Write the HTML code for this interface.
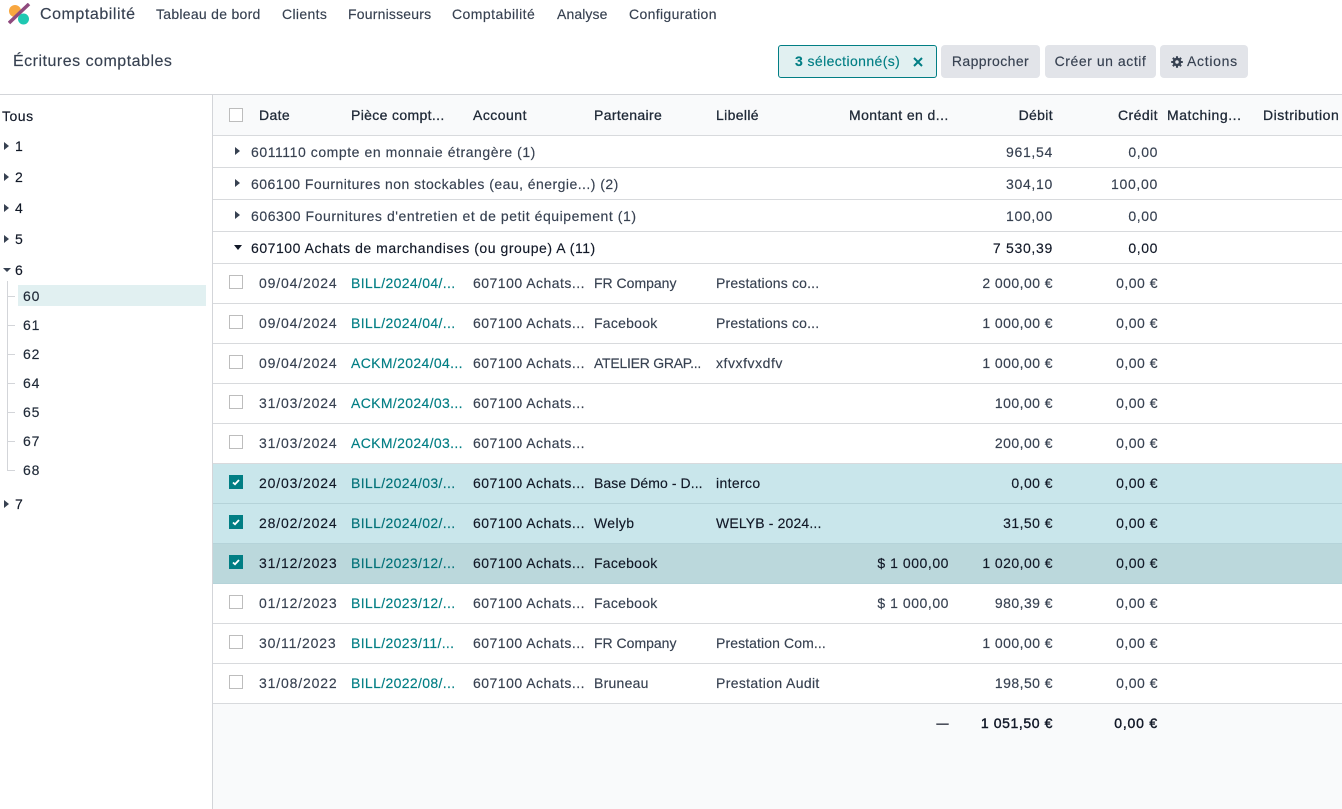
<!DOCTYPE html>
<html lang="fr"><head><meta charset="utf-8"><title>Écritures comptables</title>
<style>
html,body{margin:0;padding:0;background:#fff}
body{width:1342px;height:809px;position:relative;overflow:hidden;font-family:"Liberation Sans",sans-serif;font-size:14px;color:#374151;letter-spacing:.35px;-webkit-text-stroke:.15px}
.a,.r>span,.l{position:absolute;white-space:nowrap}
.a{line-height:20px}
.n{color:#111827}
.r{position:absolute;left:213px;width:1129px;height:39px;border-bottom:1px solid #d8dadd;line-height:39px}
.r>span{top:0}
.g{height:31px;line-height:33px;color:#374151;letter-spacing:.56px}
.g.o{color:#111827;letter-spacing:.54px}
.r .t{left:22px;top:11px;width:0;height:0;border-left:5px solid #374151;border-top:4px solid transparent;border-bottom:4px solid transparent}
.r .d{left:21px;top:13px;width:0;height:0;border-top:5px solid #111827;border-left:4.500px solid transparent;border-right:4.500px solid transparent}
.r .c{left:16px;top:11px;width:12px;height:12px;border:1px solid #bdbdbd;background:#fff}
.s{background:#c9e6eb;color:#111827;border-bottom-color:#b5d3d9}
.h{background:#bbd8dc;color:#111827}
.s .c{background:#017e84;border-color:#017e84}
.s .c svg{position:absolute;left:0;top:0}
.u{color:#017e84}
.s .u{color:#017178}
.c1{left:46px;letter-spacing:.85px}.c2{left:138px}.c3{left:260px;letter-spacing:.48px}.c4{left:381px}.c5{left:503px}
.m{right:393px;letter-spacing:.55px}.de{right:289px;letter-spacing:.45px}.cr{right:184px;letter-spacing:.5px}
.st{left:4px;width:0;height:0;border-left:5px solid #374151;border-top:4px solid transparent;border-bottom:4px solid transparent;position:absolute}
.btn{position:absolute;top:45px;height:33px;line-height:33px;background:#e2e4e9;border-radius:4px;text-align:center;color:#374151}
.l{background:#d3d5d9}
.sub{left:23px;color:#1f2937;letter-spacing:.9px}
.dg{letter-spacing:.9px}
</style></head><body>
<svg class="l" style="left:8px;top:3px;background:none" width="24" height="22" viewBox="0 0 24 22"><circle cx="7" cy="8" r="6" fill="#f8a740"/><circle cx="15.500" cy="16" r="5.500" fill="#1fc8b2"/><path d="M1 20L21 1" stroke="#8f4a7e" stroke-width="3.500"/></svg>
<div class="a" style="left:40px;top:4px;font-size:16px;line-height:21px;letter-spacing:.55px">Comptabilité</div>
<div class="a" style="left:156px;top:4px;letter-spacing:.28px">Tableau de bord</div>
<div class="a" style="left:282px;top:4px">Clients</div>
<div class="a" style="left:348px;top:4px;letter-spacing:.2px">Fournisseurs</div>
<div class="a" style="left:452px;top:4px;letter-spacing:.45px">Comptabilité</div>
<div class="a" style="left:557px;top:4px;letter-spacing:.1px">Analyse</div>
<div class="a" style="left:629px;top:4px">Configuration</div>
<div class="a" style="left:13px;top:51px;font-size:16px;line-height:21px;letter-spacing:.5px">Écritures comptables</div>

<div style="position:absolute;left:778px;top:45px;width:157px;height:31px;border:1px solid #017e84;border-radius:3px;background:#e1f0f1;line-height:31px;color:#017e84;letter-spacing:.4px"><span style="position:absolute;left:16px;white-space:nowrap"><b>3</b> sélectionné(s)</span><svg style="position:absolute;left:134px;top:11px" width="10" height="10" viewBox="0 0 10 10"><path d="M1 1L9 9M9 1L1 9" stroke="#017e84" stroke-width="2"/></svg></div>
<div class="btn" style="left:941px;width:99px;letter-spacing:.4px">Rapprocher</div>
<div class="btn" style="left:1045px;width:111px;letter-spacing:.55px">Créer un actif</div>
<div class="btn" style="left:1160px;width:88px;letter-spacing:.7px"><svg style="position:absolute;left:11px;top:11px" width="12" height="12" viewBox="0 0 12 12"><circle cx="6" cy="6" r="3" fill="none" stroke="#374151" stroke-width="2.500"/><path d="M6 .2v2.500M6 9.300v2.500M.2 6h2.500M9.300 6h2.500M1.900 1.900l1.800 1.800M8.300 8.300l1.800 1.800M10.100 1.900L8.300 3.700M3.700 8.300l-1.800 1.800" stroke="#374151" stroke-width="2.100"/></svg><span style="position:absolute;left:27px">Actions</span></div>

<div class="l" style="left:0;top:94px;width:1342px;height:1px"></div>
<div class="l" style="left:212px;top:95px;width:1px;height:714px"></div>

<!-- Sidebar -->
<div class="a n" style="left:2px;top:106px;letter-spacing:.5px">Tous</div>
<div class="st" style="top:142px"></div><div class="a n" style="left:15px;top:136px">1</div>
<div class="st" style="top:173px"></div><div class="a n" style="left:15px;top:167px">2</div>
<div class="st" style="top:204px"></div><div class="a n" style="left:15px;top:198px">4</div>
<div class="st" style="top:235px"></div><div class="a n" style="left:15px;top:229px">5</div>
<div class="a" style="left:3px;top:268px;width:0;height:0;border-top:4px solid #374151;border-left:4px solid transparent;border-right:4px solid transparent"></div><div class="a n" style="left:15px;top:260px">6</div>
<div class="st" style="top:500px"></div><div class="a n" style="left:15px;top:494px">7</div>
<div class="l" style="left:7px;top:281px;width:1px;height:190px"></div>
<div class="l" style="left:7px;top:296px;width:8px;height:1px"></div>
<div class="l" style="left:7px;top:325px;width:8px;height:1px"></div>
<div class="l" style="left:7px;top:354px;width:8px;height:1px"></div>
<div class="l" style="left:7px;top:383px;width:8px;height:1px"></div>
<div class="l" style="left:7px;top:412px;width:8px;height:1px"></div>
<div class="l" style="left:7px;top:441px;width:8px;height:1px"></div>
<div class="l" style="left:7px;top:470px;width:8px;height:1px"></div>
<div class="l" style="left:18px;top:285px;width:188px;height:21px;background:#e1f0f1"></div>
<div class="a sub" style="top:286px">60</div>
<div class="a sub" style="top:315px">61</div>
<div class="a sub" style="top:344px">62</div>
<div class="a sub" style="top:373px">64</div>
<div class="a sub" style="top:402px">65</div>
<div class="a sub" style="top:431px">67</div>
<div class="a sub" style="top:460px">68</div>

<!-- Header -->
<div class="r n" style="top:95px;height:40px;line-height:40px;background:#f9fafb;color:#1f2937;-webkit-text-stroke:.3px">
<span class="c" style="top:13px"></span><span style="left:46px">Date</span><span class="c2">Pièce compt...</span><span class="c3">Account</span><span class="c4">Partenaire</span><span class="c5">Libellé</span><span style="left:636px;letter-spacing:.42px">Montant en d...</span><span class="de" style="letter-spacing:.35px">Débit</span><span class="cr" style="letter-spacing:.45px">Crédit</span><span style="left:954px;letter-spacing:.55px">Matching...</span><span style="left:1050px;letter-spacing:.52px">Distribution</span></div>

<!-- Groups -->
<div class="r g" style="top:136px"><span class="t"></span><span style="left:38px">6011110 compte en monnaie étrangère (1)</span><span class="de" style="letter-spacing:.7px">961,54</span><span class="cr" style="letter-spacing:.6px">0,00</span></div>
<div class="r g" style="top:168px"><span class="t"></span><span style="left:38px;letter-spacing:.46px">606100 Fournitures non stockables (eau, énergie...) (2)</span><span class="de" style="letter-spacing:.7px">304,10</span><span class="cr" style="letter-spacing:.7px">100,00</span></div>
<div class="r g" style="top:200px"><span class="t"></span><span style="left:38px">606300 Fournitures d'entretien et de petit équipement (1)</span><span class="de" style="letter-spacing:.7px">100,00</span><span class="cr" style="letter-spacing:.6px">0,00</span></div>
<div class="r g o" style="top:232px"><span class="d"></span><span style="left:38px">607100 Achats de marchandises (ou groupe) A (11)</span><span class="de" style="letter-spacing:.7px">7 530,39</span><span class="cr" style="letter-spacing:.6px">0,00</span></div>

<!-- Rows -->
<div class="r" style="top:264px"><span class="c"></span><span class="c1">09/04/2024</span><span class="c2 u">BILL/2024/04/...</span><span class="c3">607100 Achats...</span><span class="c4" style="letter-spacing:0">FR Company</span><span class="c5" style="letter-spacing:.17px">Prestations co...</span><span class="de">2 000,00 €</span><span class="cr">0,00 €</span></div>
<div class="r" style="top:304px"><span class="c"></span><span class="c1">09/04/2024</span><span class="c2 u">BILL/2024/04/...</span><span class="c3">607100 Achats...</span><span class="c4" style="letter-spacing:.25px">Facebook</span><span class="c5" style="letter-spacing:.17px">Prestations co...</span><span class="de">1 000,00 €</span><span class="cr">0,00 €</span></div>
<div class="r" style="top:344px"><span class="c"></span><span class="c1">09/04/2024</span><span class="c2 u">ACKM/2024/04...</span><span class="c3">607100 Achats...</span><span class="c4" style="letter-spacing:-.25px">ATELIER GRAP...</span><span class="c5" style="letter-spacing:.55px">xfvxfvxdfv</span><span class="de">1 000,00 €</span><span class="cr">0,00 €</span></div>
<div class="r" style="top:384px"><span class="c"></span><span class="c1">31/03/2024</span><span class="c2 u">ACKM/2024/03...</span><span class="c3">607100 Achats...</span><span class="de">100,00 €</span><span class="cr">0,00 €</span></div>
<div class="r" style="top:424px"><span class="c"></span><span class="c1">31/03/2024</span><span class="c2 u">ACKM/2024/03...</span><span class="c3">607100 Achats...</span><span class="de">200,00 €</span><span class="cr">0,00 €</span></div>
<div class="r s" style="top:464px"><span class="c"><svg width="12" height="12" viewBox="0 0 12 12"><path d="M3 6.500L5 8.300L9 4" fill="none" stroke="#fff" stroke-width="1.800"/></svg></span><span class="c1">20/03/2024</span><span class="c2 u">BILL/2024/03/...</span><span class="c3">607100 Achats...</span><span class="c4" style="letter-spacing:.08px">Base Démo - D...</span><span class="c5">interco</span><span class="de">0,00 €</span><span class="cr">0,00 €</span></div>
<div class="r s" style="top:504px"><span class="c"><svg width="12" height="12" viewBox="0 0 12 12"><path d="M3 6.500L5 8.300L9 4" fill="none" stroke="#fff" stroke-width="1.800"/></svg></span><span class="c1">28/02/2024</span><span class="c2 u">BILL/2024/02/...</span><span class="c3">607100 Achats...</span><span class="c4">Welyb</span><span class="c5" style="letter-spacing:.15px">WELYB - 2024...</span><span class="de">31,50 €</span><span class="cr">0,00 €</span></div>
<div class="r s h" style="top:544px"><span class="c"><svg width="12" height="12" viewBox="0 0 12 12"><path d="M3 6.500L5 8.300L9 4" fill="none" stroke="#fff" stroke-width="1.800"/></svg></span><span class="c1">31/12/2023</span><span class="c2 u">BILL/2023/12/...</span><span class="c3">607100 Achats...</span><span class="c4" style="letter-spacing:.25px">Facebook</span><span class="m">$ 1 000,00</span><span class="de">1 020,00 €</span><span class="cr">0,00 €</span></div>
<div class="r" style="top:584px"><span class="c"></span><span class="c1">01/12/2023</span><span class="c2 u">BILL/2023/12/...</span><span class="c3">607100 Achats...</span><span class="c4" style="letter-spacing:.25px">Facebook</span><span class="m">$ 1 000,00</span><span class="de">980,39 €</span><span class="cr">0,00 €</span></div>
<div class="r" style="top:624px"><span class="c"></span><span class="c1">30/11/2023</span><span class="c2 u">BILL/2023/11/...</span><span class="c3">607100 Achats...</span><span class="c4" style="letter-spacing:0">FR Company</span><span class="c5" style="letter-spacing:.1px">Prestation Com...</span><span class="de">1 000,00 €</span><span class="cr">0,00 €</span></div>
<div class="r" style="top:664px"><span class="c"></span><span class="c1">31/08/2022</span><span class="c2 u">BILL/2022/08/...</span><span class="c3">607100 Achats...</span><span class="c4" style="letter-spacing:.25px">Bruneau</span><span class="c5">Prestation Audit</span><span class="de">198,50 €</span><span class="cr">0,00 €</span></div>

<!-- Footer -->
<div class="r n" style="top:704px;height:105px;background:#f9fafb;border:0;line-height:39px;-webkit-text-stroke:.4px #111827"><span class="m" style="font-size:12px">—</span><span class="de" style="letter-spacing:.6px">1 051,50 €</span><span class="cr" style="letter-spacing:.8px">0,00 €</span></div>
</body></html>
